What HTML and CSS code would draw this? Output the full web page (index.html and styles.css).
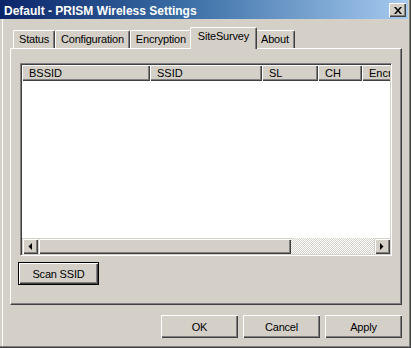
FILE: index.html
```html
<!DOCTYPE html>
<html>
<head>
<meta charset="utf-8">
<link rel="stylesheet" href="styles.css">
</head>
<body>
<div class="window">
  <div class="titlebar">
    <span class="title">Default - PRISM Wireless Settings</span>
    <span class="close">
      <svg width="8" height="7" viewBox="0 0 8 7"><path d="M0 0h2l2 2.5 2-2.5h2l-3 3.5 3 3.5h-2l-2-2.5-2 2.5h-2l3-3.5z" fill="#000"/></svg>
    </span>
  </div>
  <div class="content">
    <div class="tabs">
      <div class="tab">Status</div>
      <div class="tab">Configuration</div>
      <div class="tab">Encryption</div>
      <div class="tab active">SiteSurvey</div>
      <div class="tab">About</div>
    </div>
    <div class="panel">
      <div class="listview">
        <div class="header">
          <div class="col c-bssid">BSSID</div>
          <div class="col c-ssid">SSID</div>
          <div class="col c-sl">SL</div>
          <div class="col c-ch">CH</div>
          <div class="col c-enc">Encryption</div>
        </div>
        <div class="rows"></div>
        <div class="hscroll">
          <div class="sbtn">
            <svg width="4" height="7" viewBox="0 0 4 7"><path d="M4 0v7L0.5 3.5z" fill="#000"/></svg>
          </div>
          <div class="thumb"></div>
          <div class="track"></div>
          <div class="sbtn">
            <svg width="4" height="7" viewBox="0 0 4 7"><path d="M0 0v7l3.5-3.5z" fill="#000"/></svg>
          </div>
        </div>
      </div>
      <div class="scan-row">
        <button class="btn default">Scan SSID</button>
      </div>
    </div>
    <div class="buttons">
      <button class="btn">OK</button>
      <button class="btn">Cancel</button>
      <button class="btn">Apply</button>
    </div>
  </div>
</div>
</body>
</html>
```
FILE: styles.css
```css
* { box-sizing: border-box; }
html, body { margin: 0; padding: 0; }
body {
  width: 411px;
  height: 348px;
  overflow: hidden;
  background: #d4d0c8;
  font-family: "Liberation Sans", Arial, sans-serif;
  font-size: 11px;
  color: #000;
}
.window {
  width: 411px;
  height: 348px;
  background: #d4d0c8;
  display: flex;
  flex-direction: column;
  padding: 0 3px 3px 0;
  box-shadow: inset -1px -1px #404040, inset -2px -2px #808080, inset 2px 0 #d4d0c8, inset 3px 0 #fff;
}
.titlebar {
  height: 19px;
  flex: 0 0 19px;
  display: flex;
  align-items: center;
  justify-content: space-between;
  background: linear-gradient(to right, #0a246a 0%, #3a6ea5 45%, #a6caf0 100%);
  padding: 0 2px 0 4px;
}
.title {
  color: #fff;
  font-weight: bold;
  font-size: 12px;
  padding-top: 2px;
  white-space: nowrap;
}
.close {
  width: 17px;
  height: 14px;
  margin-top: 1px;
  background: #d4d0c8;
  display: flex;
  align-items: center;
  justify-content: center;
  box-shadow: inset 1px 1px #fff, inset -1px -1px #404040, inset -2px -2px #808080;
}
.content {
  flex: 1;
  display: flex;
  flex-direction: column;
  padding: 8px 6px 0 10px;
}
.tabs {
  display: flex;
  align-items: flex-end;
  height: 21px;
  padding-left: 3px;
}
.tab {
  height: 18px;
  padding: 0 5px 1px 5px;
  display: flex;
  align-items: center;
  letter-spacing: -0.2px;
  white-space: nowrap;
  border-top: 1px solid #fff;
  border-left: 1px solid #fff;
  border-right: 1px solid #404040;
  box-shadow: inset -1px 0 #808080;
  border-radius: 2px 2px 0 0;
  background: #d4d0c8;
}
.tab.active {
  position: relative;
  z-index: 2;
  height: 22px;
  margin: 0 -2px -1px -2px;
  padding: 0 7px 5px 7px;
}
.panel {
  height: 257px;
  flex: 0 0 257px;
  display: flex;
  flex-direction: column;
  border: 1px solid;
  border-color: #fff #404040 #404040 #fff;
  box-shadow: inset -1px -1px #808080;
  padding: 14px 9px 0 9px;
}
.listview {
  height: 193px;
  display: flex;
  flex-direction: column;
  background: #fff;
  border: 1px solid;
  border-color: #808080 #fff #fff #808080;
  box-shadow: inset 1px 1px #404040, inset -1px -1px #d4d0c8;
  padding: 1px;
}
.header {
  height: 16px;
  flex: 0 0 16px;
  display: flex;
  overflow: hidden;
}
.col {
  flex: 0 0 auto;
  height: 16px;
  line-height: 16px;
  padding-left: 7px;
  background: #d4d0c8;
  white-space: nowrap;
  overflow: hidden;
  box-shadow: inset 1px 1px #fff, inset -1px -1px #404040, inset -2px -2px #808080;
}
.c-bssid { width: 128px; }
.c-ssid { width: 112px; }
.c-sl { width: 56px; }
.c-ch { width: 44px; }
.c-enc { width: 70px; }
.rows { flex: 1; background: #fff; }
.hscroll {
  height: 16px;
  flex: 0 0 16px;
  display: flex;
}
.sbtn {
  width: 16px;
  flex: 0 0 16px;
  background: #d4d0c8;
  display: flex;
  align-items: center;
  justify-content: center;
  box-shadow: inset 1px 1px #d4d0c8, inset 2px 2px #fff, inset -1px -1px #404040, inset -2px -2px #808080;
}
.thumb {
  flex: 0 0 253px;
  background: #d4d0c8;
  box-shadow: inset 1px 1px #d4d0c8, inset 2px 2px #fff, inset -1px -1px #404040, inset -2px -2px #808080;
}
.track {
  flex: 1;
  background: repeating-conic-gradient(#fff 0 25%, #d4d0c8 0 50%) 0 0 / 2px 2px;
}
.scan-row {
  display: flex;
  margin-top: 6px;
  margin-left: -2px;
}
.btn {
  font-family: "Liberation Sans", Arial, sans-serif;
  font-size: 11px;
  color: #000;
  letter-spacing: -0.2px;
  height: 23px;
  width: 77px;
  padding: 0;
  margin: 0;
  border: none;
  background: #d4d0c8;
  box-shadow: inset 1px 1px #fff, inset -1px -1px #404040, inset -2px -2px #808080;
}
.btn.default {
  width: 81px;
  border: 1px solid #000;
}
.buttons {
  display: flex;
  justify-content: flex-end;
  gap: 5px;
  margin-top: 10px;
}
```
